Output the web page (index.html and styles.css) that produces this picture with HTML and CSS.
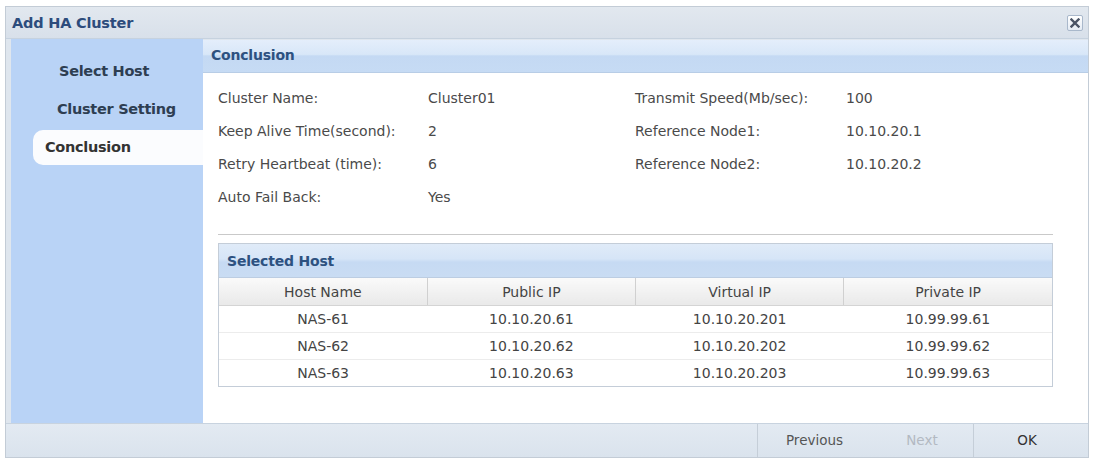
FILE: index.html
```html
<!DOCTYPE html>
<html>
<head>
<meta charset="utf-8">
<title>Add HA Cluster</title>
<link rel="stylesheet" href="styles.css">
</head>
<body>
<!-- Add HA Cluster dialog -->
<div class="window">
  <div class="titlebar">
    <span class="title">Add HA Cluster</span>
    <span class="close-btn">
      <svg width="10" height="10" viewBox="0 0 10 10"><path d="M1.5 1.5 L8.5 8.5 M8.5 1.5 L1.5 8.5" stroke="#4a5466" stroke-width="2.4" stroke-linecap="square"/></svg>
    </span>
  </div>

  <div class="body">
    <!-- Wizard steps -->
    <div class="sidebar">
      <div class="step">Select Host</div>
      <div class="step">Cluster Setting</div>
      <div class="step active">Conclusion</div>
    </div>

    <div class="main">
      <div class="panel-header">Conclusion</div>
      <div class="panel-body">
        <div class="fields">
          <div class="label">Cluster Name:</div>
          <div class="value">Cluster01</div>
          <div class="label">Transmit Speed(Mb/sec):</div>
          <div class="value">100</div>

          <div class="label">Keep Alive Time(second):</div>
          <div class="value">2</div>
          <div class="label">Reference Node1:</div>
          <div class="value">10.10.20.1</div>

          <div class="label">Retry Heartbeat (time):</div>
          <div class="value">6</div>
          <div class="label">Reference Node2:</div>
          <div class="value">10.10.20.2</div>

          <div class="label">Auto Fail Back:</div>
          <div class="value">Yes</div>
        </div>

        <div class="separator"></div>

        <!-- Selected host grid -->
        <div class="grid">
          <div class="grid-title">Selected Host</div>
          <table class="grid-table">
            <thead>
              <tr>
                <th>Host Name</th>
                <th>Public IP</th>
                <th>Virtual IP</th>
                <th>Private IP</th>
              </tr>
            </thead>
            <tbody>
              <tr><td>NAS-61</td><td>10.10.20.61</td><td>10.10.20.201</td><td>10.99.99.61</td></tr>
              <tr><td>NAS-62</td><td>10.10.20.62</td><td>10.10.20.202</td><td>10.99.99.62</td></tr>
              <tr><td>NAS-63</td><td>10.10.20.63</td><td>10.10.20.203</td><td>10.99.99.63</td></tr>
            </tbody>
          </table>
        </div>
      </div>
    </div>
  </div>

  <!-- Buttons -->
  <div class="footer">
    <span class="btn btn-prev">Previous</span>
    <span class="btn btn-next disabled">Next</span>
    <span class="btn btn-ok">OK</span>
  </div>
</div>
</body>
</html>
```

FILE: styles.css
```css
body {
  margin: 0;
  background-color: #fff;
  font-family: "DejaVu Sans", Tahoma, sans-serif;
  font-size: 14px;
  color: #4a4a4a;
}

/* Dialog frame */
.window {
  margin: 6px 4px 0 5px;
  width: 1082px;
  height: 450px;
  border: 1px solid #c3ccd6;
  background-color: #dfe6ee;
  display: flex;
  flex-direction: column;
}

.titlebar {
  height: 31px;
  display: flex;
  align-items: center;
  justify-content: space-between;
  padding: 0 5px 0 6px;
  background: linear-gradient(#e2e8ef, #d8e0ea);
  border-bottom: 1px solid #c6d2df;
}

.title {
  font-weight: bold;
  font-size: 14.5px;
  color: #2d4c7c;
  letter-spacing: -0.2px;
}

.close-btn {
  width: 14px;
  height: 14px;
  border: 1px solid #a9b8cb;
  border-radius: 2px;
  background: linear-gradient(#ffffff, #e4ebf4);
  display: flex;
  align-items: center;
  justify-content: center;
}

.body {
  flex: 1;
  display: flex;
  margin: 0 0 0 5px;
}

/* Steps */
.sidebar {
  width: 192px;
  background-color: #b9d3f6;
  padding-top: 20px;
}

.step {
  font-weight: bold;
  font-size: 14.5px;
  color: #2e3e52;
  height: 38px;
  line-height: 25px;
  padding-left: 48px;
  letter-spacing: -0.3px;
}

.step + .step {
  padding-left: 46px;
  height: 33px;
}

.step.active {
  margin-left: 22px;
  padding-left: 12px;
  height: 35px;
  line-height: 35px;
  background-color: #fbfcfe;
  border-radius: 10px 0 0 10px;
  color: #333;
}

.main {
  flex: 1;
  display: flex;
  flex-direction: column;
  margin-top: 1px;
}

.panel-header {
  height: 32px;
  line-height: 30px;
  padding-left: 8px;
  font-weight: bold;
  font-size: 14px;
  color: #2d5180;
  letter-spacing: -0.2px;
  background: linear-gradient(#e4eefb 0%, #d8e7f8 45%, #c4d9f3 50%, #c6dbf4 100%);
  border-bottom: 1px solid #b8cde6;
}

.panel-body {
  flex: 1;
  background-color: #fff;
  padding: 8px 35px 0 15px;
}

/* Summary fields */
.fields {
  display: grid;
  grid-template-columns: 210px 207px 211px 1fr;
  grid-auto-rows: 33px;
  align-items: center;
}

.label, .value {
  font-size: 14px;
  color: #4a4a4a;
}

.separator {
  height: 1px;
  background-color: #c9c9c9;
  margin-top: 21px;
}

/* Host grid */
.grid {
  margin-top: 8px;
  border: 1px solid #c4cdd8;
}

.grid-title {
  height: 33px;
  line-height: 34px;
  padding-left: 8px;
  font-weight: bold;
  font-size: 14px;
  color: #2d5180;
  letter-spacing: -0.2px;
  background: linear-gradient(#e0ebf8 0%, #d6e5f7 45%, #c6daf3 55%, #c9dcf3 100%);
  border-bottom: 1px solid #bccde2;
}

.grid-table {
  width: 100%;
  border-collapse: collapse;
  table-layout: fixed;
}

.grid-table th {
  height: 27px;
  padding: 0;
  font-weight: normal;
  font-size: 14px;
  color: #444;
  background: linear-gradient(#fafafa, #e9e9e9);
  border-right: 1px solid #d0d0d0;
  border-bottom: 1px solid #d4d4d4;
}

.grid-table th:last-child {
  border-right: none;
}

.grid-table td {
  height: 26px;
  padding: 0;
  text-align: center;
  font-size: 14px;
  color: #444;
  border-bottom: 1px solid #ececec;
}

.grid-table tr:last-child td {
  border-bottom: none;
}

/* Footer buttons */
.footer {
  height: 33px;
  display: flex;
  justify-content: flex-end;
  align-items: center;
  padding-right: 8px;
  background: linear-gradient(#e3eaf2, #dae3ed);
  border-top: 1px solid #c8d3df;
}

.btn {
  font-size: 13.5px;
  color: #555;
  text-align: center;
  line-height: 33px;
}

.btn-prev {
  width: 113px;
  border-left: 1px solid #c5ced8;
}

.btn-next {
  width: 102px;
  color: #b3b9c2;
}

.btn-ok {
  width: 106px;
  border-left: 1px solid #c5ced8;
  color: #333;
}
```
